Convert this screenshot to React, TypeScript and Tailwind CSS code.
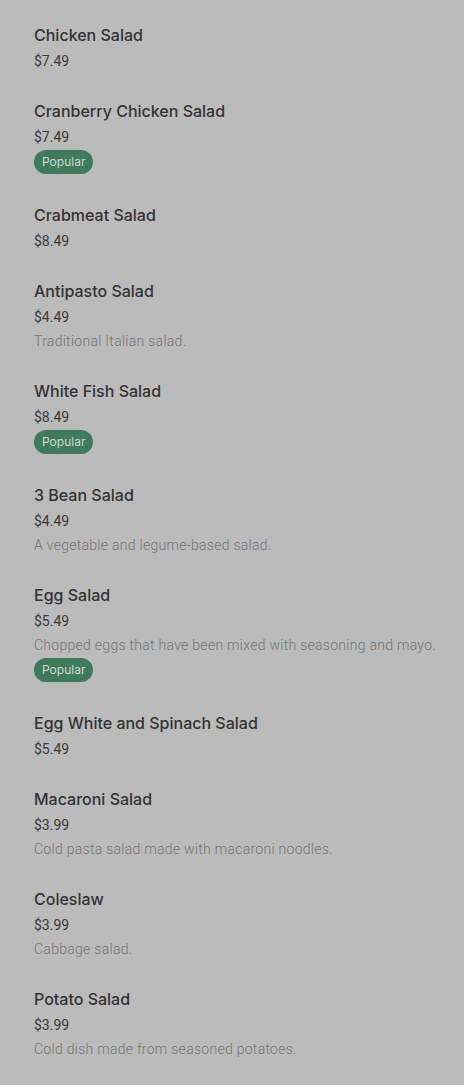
type Item = {
  name: string;
  price: string;
  description?: string;
  popular?: boolean;
};

const items: Item[] = [
  { name: "Chicken Salad", price: "$7.49" },
  { name: "Cranberry Chicken Salad", price: "$7.49", popular: true },
  { name: "Crabmeat Salad", price: "$8.49" },
  { name: "Antipasto Salad", price: "$4.49", description: "Traditional Italian salad." },
  { name: "White Fish Salad", price: "$8.49", popular: true },
  { name: "3 Bean Salad", price: "$4.49", description: "A vegetable and legume-based salad." },
  {
    name: "Egg Salad",
    price: "$5.49",
    description: "Chopped eggs that have been mixed with seasoning and mayo.",
    popular: true,
  },
  { name: "Egg White and Spinach Salad", price: "$5.49" },
  { name: "Macaroni Salad", price: "$3.99", description: "Cold pasta salad made with macaroni noodles." },
  { name: "Coleslaw", price: "$3.99", description: "Cabbage salad." },
  { name: "Potato Salad", price: "$3.99", description: "Cold dish made from seasoned potatoes." },
];

function MenuItem({ item }: { item: Item }) {
  return (
    <li className="mb-[26px] flex flex-col items-start">
      <span className="text-[16px] leading-6 font-medium text-[#333333]">{item.name}</span>
      <span
        className="mt-[2px] text-[14px] leading-6 text-[#3a3a3a]"
        style={{ fontFamily: "Roboto, sans-serif" }}
      >
        {item.price}
      </span>
      {item.description && (
        <span
          className="whitespace-nowrap text-[14px] leading-6 font-light tracking-[0.28px] text-[#767676]"
          style={{ fontFamily: "Roboto, sans-serif" }}
        >
          {item.description}
        </span>
      )}
      {item.popular && (
        <span className="mt-px mb-[3px] h-6 px-2 rounded-full bg-[#3f7a5c] text-[12px] leading-6 text-[#c6ddd0]">
          Popular
        </span>
      )}
    </li>
  );
}

export default function App() {
  return (
    <div
      className="w-screen min-h-screen bg-[#bbbbbb] px-[34px] pt-[23px]"
      style={{ fontFamily: "Inter, 'Noto Sans', sans-serif" }}
    >
      <ul className="flex flex-col">
        {items.map((item) => (
          <MenuItem key={item.name} item={item} />
        ))}
      </ul>
    </div>
  );
}
